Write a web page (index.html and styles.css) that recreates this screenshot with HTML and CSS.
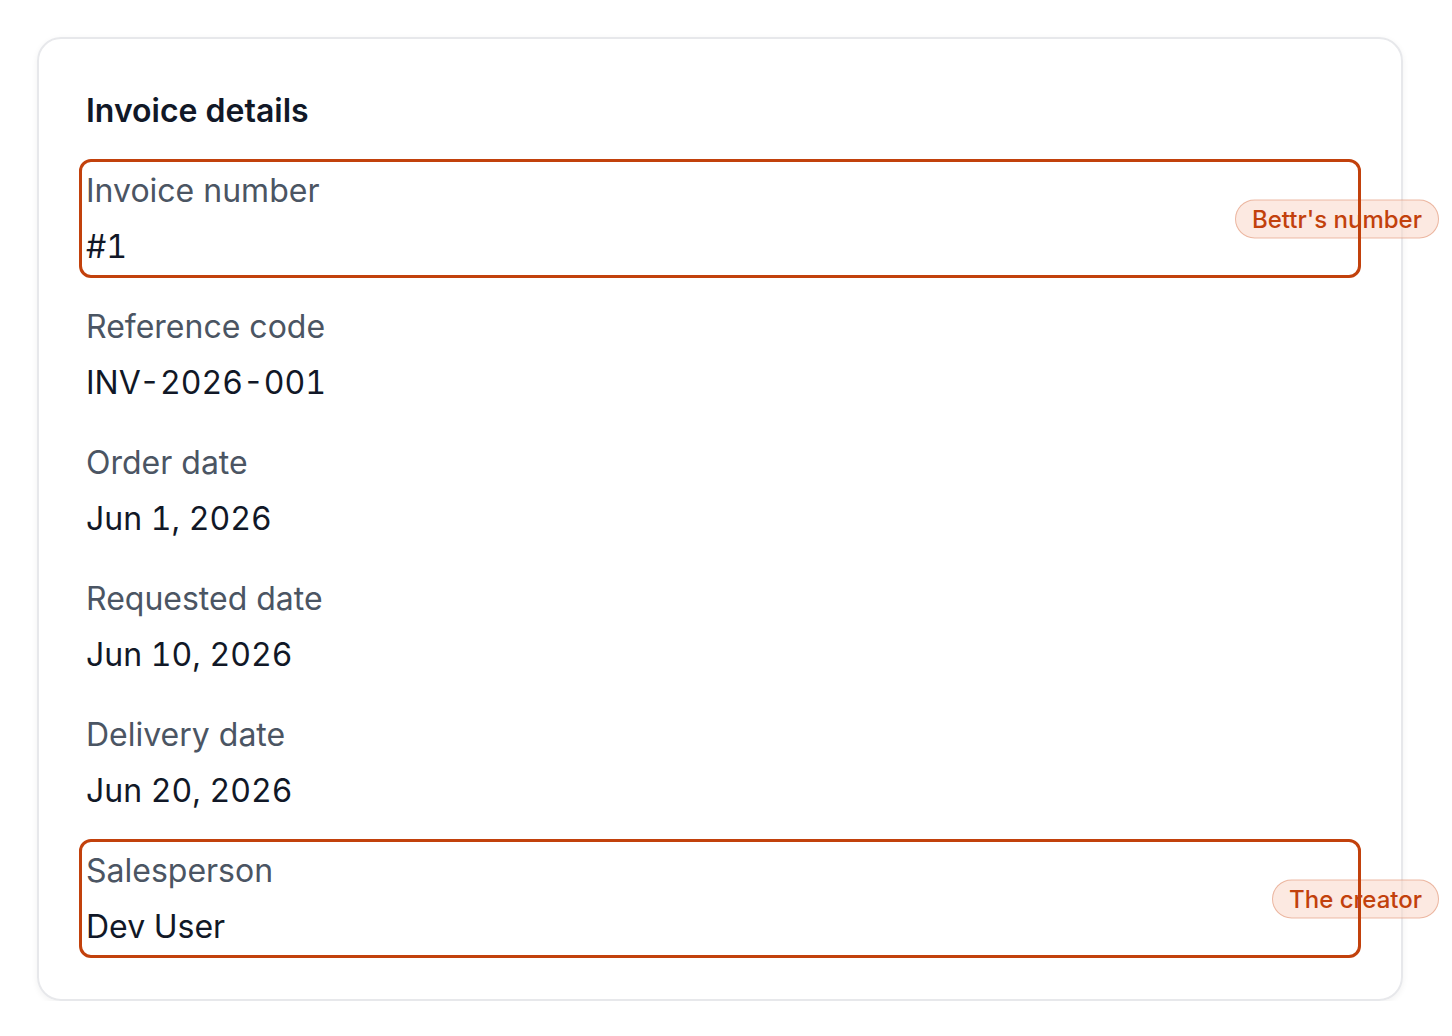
FILE: index.html
```html
<!DOCTYPE html>
<html lang="en">
<head>
    <meta charset="UTF-8">
    <meta name="viewport" content="width=device-width, initial-scale=1.0">
    <title>Invoice details</title>
    <link rel="stylesheet" href="styles.css">
</head>
<body>

    <div class="card">
        <h2 class="card-title">Invoice details</h2>

        <div class="field marked">
            <div class="label">Invoice number</div>
            <div class="value">#1</div>
            <span class="tag">Bettr's number</span>
        </div>

        <div class="field">
            <div class="label">Reference code</div>
            <div class="value">INV-2026-001</div>
        </div>

        <div class="field">
            <div class="label">Order date</div>
            <div class="value">Jun 1, 2026</div>
        </div>

        <div class="field">
            <div class="label">Requested date</div>
            <div class="value">Jun 10, 2026</div>
        </div>

        <div class="field">
            <div class="label">Delivery date</div>
            <div class="value">Jun 20, 2026</div>
        </div>

        <div class="field marked">
            <div class="label">Salesperson</div>
            <div class="value">Dev User</div>
            <span class="tag">The creator</span>
        </div>
    </div>

</body>
</html>
```

FILE: styles.css
```css
body {
    margin: 0;
    background: #ffffff;
    font-family: Inter, "Noto Sans", Arial, sans-serif;
    color: #111827;
}

.card {
    margin: 37px 0 0 37px;
    width: 1366px;
    box-sizing: border-box;
    padding: 52px 50px 52px 47px;
    border: 2px solid #e7e8eb;
    border-radius: 24px;
    box-shadow: 0 2px 6px rgba(0, 0, 0, 0.06);
    display: flex;
    flex-direction: column;
    gap: 40px;
}

.card-title {
    margin: 0;
    font-size: 32px;
    line-height: 40px;
    font-weight: 600;
    color: #111827;
}

.field {
    position: relative;
    display: flex;
    flex-direction: column;
    gap: 16px;
}

.label {
    font-size: 32px;
    line-height: 40px;
    color: #4b5563;
}

.value {
    font-size: 32px;
    line-height: 40px;
    color: #111827;
    font-variant-numeric: tabular-nums;
}

.tag {
    position: absolute;
    top: 50%;
    right: -88px;
    transform: translateY(-50%);
    padding: 0 16px;
    height: 37px;
    line-height: 37px;
    border-radius: 20px;
    border: 1px solid rgba(214, 120, 80, 0.45);
    background: rgba(250, 215, 200, 0.55);
    color: #c2410c;
    font-size: 24px;
    font-weight: 500;
}

.marked::after {
    content: "";
    position: absolute;
    top: -12px;
    bottom: -11px;
    left: -7px;
    right: -10px;
    border: 3px solid #c2410c;
    border-radius: 12px;
    pointer-events: none;
}
```
